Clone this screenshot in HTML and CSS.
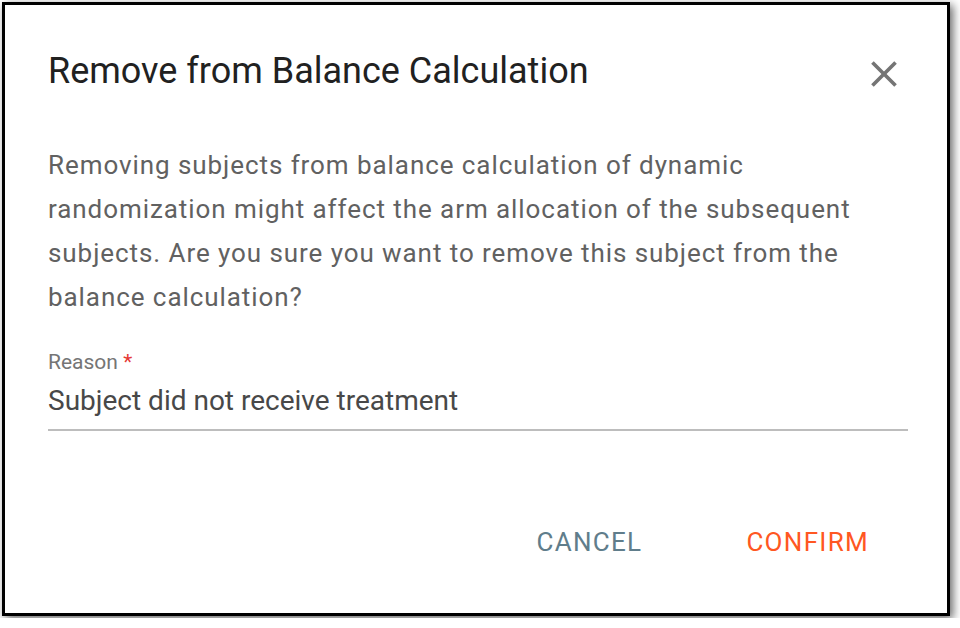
FILE: index.html
```html
<!DOCTYPE html>
<html lang="en">
<head>
    <meta charset="UTF-8">
    <title>Remove from Balance Calculation</title>
    <link rel="stylesheet" href="styles.css">
</head>
<body>
    <div class="dialog">
        <div class="dialog-header">
            <h2 class="dialog-title">Remove from Balance Calculation</h2>
            <button class="close-btn" aria-label="Close">
                <svg width="30" height="30" viewBox="0 0 24 24">
                    <path d="M19 6.41L17.59 5 12 10.59 6.41 5 5 6.41 10.59 12 5 17.59 6.41 19 12 13.41 17.59 19 19 17.59 13.41 12z" fill="#757575"/>
                </svg>
            </button>
        </div>

        <p class="dialog-text">Removing subjects from balance calculation of dynamic randomization might affect the arm allocation of the subsequent subjects. Are you sure you want to remove this subject from the balance calculation?</p>

        <div class="field">
            <label class="field-label">Reason <span class="required">*</span></label>
            <div class="field-input">Subject did not receive treatment</div>
        </div>

        <div class="dialog-actions">
            <button class="btn btn-cancel">CANCEL</button>
            <button class="btn btn-confirm">CONFIRM</button>
        </div>
    </div>
</body>
</html>
```

FILE: styles.css
```css
* {
    margin: 0;
    padding: 0;
    box-sizing: border-box;
    font-family: 'Roboto', 'Liberation Sans', sans-serif;
}

body {
    background: #fff;
    padding: 2px;
}

.dialog {
    width: 948px;
    height: 614px;
    border: 3px solid #000;
    background: #fff;
    box-shadow: 3px 3px 9px rgba(0, 0, 0, 0.6);
    padding: 0 41px 0 43px;
    display: flex;
    flex-direction: column;
}

.dialog-header {
    display: flex;
    justify-content: space-between;
    align-items: center;
    height: 138px;
    padding-bottom: 6px;
}

.dialog-title {
    font-size: 36px;
    font-weight: 400;
    color: #212121;
}

.close-btn {
    background: none;
    border: none;
    width: 44px;
    height: 44px;
    margin-top: 6px;
    display: flex;
    align-items: center;
    justify-content: center;
    cursor: pointer;
}

.close-btn svg {
    width: 44px;
    height: 44px;
}

.dialog-text {
    font-size: 26px;
    letter-spacing: 0.93px;
    line-height: 44px;
    color: #616161;
    width: 860px;
}

.field {
    margin-top: 31px;
    width: 860px;
    border-bottom: 2px solid #bdbdbd;
    padding-bottom: 12px;
}

.field-label {
    display: block;
    font-size: 21px;
    color: #757575;
}

.required {
    color: #e53935;
}

.field-input {
    margin-top: 10px;
    font-size: 28px;
    color: #484848;
}

.dialog-actions {
    display: flex;
    justify-content: flex-end;
    gap: 40px;
    margin-top: 88px;
    padding-right: 5px;
}

.btn {
    background: none;
    border: none;
    font-size: 26px;
    letter-spacing: 1.3px;
    padding: 8px 32px;
    cursor: pointer;
}

.btn-cancel {
    color: #607d8b;
}

.btn-confirm {
    color: #ff5722;
}
```
